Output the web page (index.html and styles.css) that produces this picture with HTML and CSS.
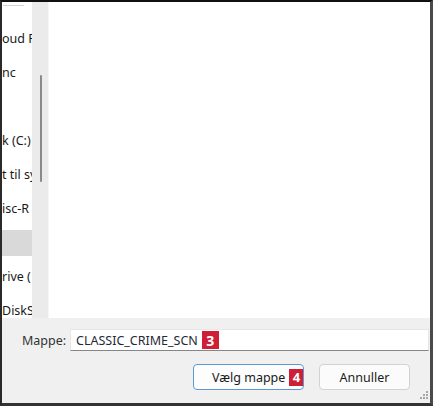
FILE: index.html
```html
<!DOCTYPE html>
<html lang="da">
<head>
<meta charset="utf-8">
<title>Vælg mappe</title>
<link rel="stylesheet" href="styles.css">
</head>
<body>
<div class="window">
  <div class="top">
    <nav class="nav">
      <div class="sep"></div>
      <div class="row"><span>oud F</span></div>
      <div class="row"><span>nc</span></div>
      <div class="row"><span></span></div>
      <div class="row"><span>k (C:)</span></div>
      <div class="row"><span>t til sy</span></div>
      <div class="row"><span>isc-R</span></div>
      <div class="row selected"><span></span></div>
      <div class="row"><span>rive (</span></div>
      <div class="row"><span>DiskS</span></div>
    </nav>
    <div class="track"><div class="thumb"></div></div>
    <main class="content"></main>
  </div>
  <div class="folder-row">
    <label class="label">Mappe:</label>
    <div class="input"><span class="value">CLASSIC_CRIME_SCN</span><span class="badge badge-3">3</span></div>
  </div>
  <div class="buttons">
    <button class="btn primary"><span class="btn-text">Vælg mappe</span><span class="badge badge-4">4</span></button>
    <button class="btn cancel">Annuller</button>
  </div>
  <svg class="grip" width="10" height="10" viewBox="0 0 10 10">
    <rect x="8" y="0" width="2" height="2" fill="#a8a8a8"/>
    <rect x="5" y="3" width="2" height="2" fill="#a8a8a8"/>
    <rect x="8" y="3" width="2" height="2" fill="#a8a8a8"/>
    <rect x="2" y="6" width="2" height="2" fill="#a8a8a8"/>
    <rect x="5" y="6" width="2" height="2" fill="#a8a8a8"/>
    <rect x="8" y="6" width="2" height="2" fill="#a8a8a8"/>
  </svg>
</div>
</body>
</html>
```

FILE: styles.css
```css
html, body {
  margin: 0;
  padding: 0;
  background: #f0f0f0;
}
.window {
  position: relative;
  width: 433px;
  height: 406px;
  box-sizing: border-box;
  border-top: 2px solid #111;
  border-left: 2px solid #2a2a2a;
  border-right: 3px solid #4a4a4a;
  border-bottom: 3px solid #333;
  background: #f0f0f0;
  font-family: "Noto Sans", "Open Sans", sans-serif;
  font-size: 12.5px;
  color: #1a1a1a;
  display: flex;
  flex-direction: column;
}
.top {
  height: 316px;
  display: flex;
  flex: none;
}
.nav {
  width: 30px;
  background: #fff;
  overflow: hidden;
  padding-top: 3px;
  box-sizing: border-box;
}
.sep {
  height: 1px;
  width: 21px;
  margin-left: 1px;
  background: #d4d4d4;
  margin-bottom: 16px;
}
.row {
  height: 34px;
  display: flex;
  align-items: center;
  white-space: nowrap;
  overflow: hidden;
}
.row span {
  display: block;
  line-height: 16px;
}
.row.selected span {
  width: 30px;
  height: 26px;
  background: #d9d9d9;
}
.track {
  width: 17px;
  background: #ebebeb;
  border-right: 1px solid #f6f6f6;
  padding-top: 73px;
  box-sizing: border-box;
}
.thumb {
  width: 2px;
  height: 107px;
  margin-left: 8px;
  background: #8a8a8a;
  border-radius: 1px;
}
.content {
  flex: 1;
  background: #fff;
}
.folder-row {
  margin-top: 11px;
  height: 22px;
  display: flex;
  align-items: center;
}
.label {
  width: 68px;
  padding-left: 20px;
  box-sizing: border-box;
  color: #333;
}
.input {
  flex: 1;
  height: 22px;
  margin-right: 1px;
  box-sizing: border-box;
  background: #fff;
  border: 1px solid #e6e6e6;
  border-bottom: 1px solid #868686;
  padding-left: 5px;
  display: flex;
  align-items: center;
  color: #1f2a38;
  white-space: nowrap;
}
.badge {
  display: inline-flex;
  align-items: center;
  justify-content: center;
  flex: none;
  background: #cf1f36;
  color: #fff;
  font-weight: 700;
  font-family: "Open Sans", "Noto Sans", sans-serif;
}
.badge-3 {
  width: 17px;
  height: 18px;
  margin-left: 4px;
  font-size: 14px;
}
.buttons {
  margin-top: 13px;
  display: flex;
  justify-content: flex-end;
  gap: 15px;
  padding-right: 20px;
}
.btn {
  height: 26px;
  box-sizing: border-box;
  border-radius: 4px;
  font-family: inherit;
  font-size: 12.5px;
  color: #1a1a1a;
  display: flex;
  align-items: center;
  padding: 0;
  white-space: nowrap;
}
.primary {
  width: 111px;
  border: 1px solid #5b9ad6;
  background: #fdfdfd;
  padding-left: 18px;
  gap: 4px;
}
.btn-text {
  flex: none;
}
.badge-4 {
  width: 14px;
  height: 17px;
  font-size: 13px;
}
.cancel {
  width: 91px;
  border: 1px solid #d2d2d2;
  background: #fbfbfb;
  justify-content: center;
}
.grip {
  position: absolute;
  right: 2px;
  bottom: 2px;
}
```
